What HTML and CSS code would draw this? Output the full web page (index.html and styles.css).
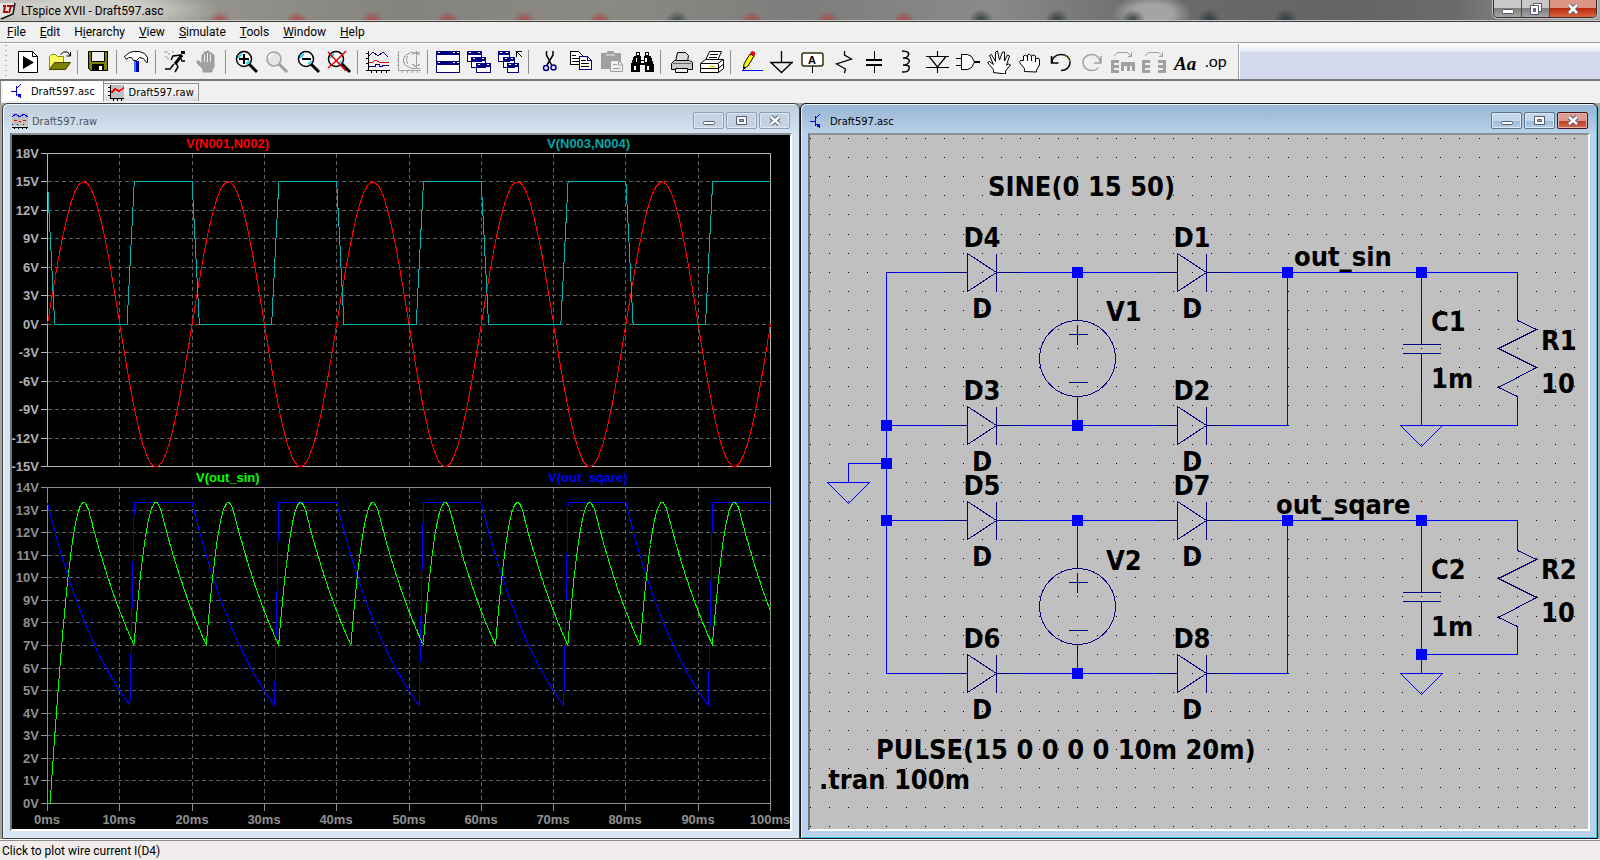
FILE: index.html
```html
<!DOCTYPE html>
<html lang="en">
<head>
    <meta charset="UTF-8">
    <meta name="viewport" content="width=device-width, initial-scale=1.0">
    <title>LTspice XVII - Draft597.asc</title>
    <link rel="stylesheet" href="styles.css">
</head>
<body>

    <!-- Title bar -->
    <header class="titlebar">
        <svg class="app-icon" width="16" height="18" viewBox="0 0 16 18" aria-hidden="true">
            <path d="M0 1h15l-2 11-11 5-2-2z" fill="#e8e4e0"/>
            <path d="M1 17l12-5 2-11" fill="none" stroke="#111" stroke-width="1.5"/>
            <path d="M3 4h2l-1 6h4M7 4h7M11 4l-2 7" fill="none" stroke="#a80c0c" stroke-width="2"/>
        </svg>
        <h1>LTspice XVII - Draft597.asc</h1>
        <div class="app-buttons">
            <button aria-label="Minimize"><svg width="12" height="12" viewBox="0 0 12 12"><rect x=".5" y="6.500" width="11" height="4" rx="1" fill="#fff" stroke="#555a70"/></svg></button>
            <button aria-label="Restore"><svg width="12" height="12" viewBox="0 0 12 12"><path d="M3.500 .5h8v8h-8z" fill="#fff" stroke="#555a70"/><path d="M.5 2.500h8v9h-8z" fill="#fff" stroke="#555a70"/><path d="M3.500 5.500h2v3h-2z" fill="#888" stroke="#555a70"/></svg></button>
            <button class="close" aria-label="Close"><svg width="12" height="12" viewBox="0 0 12 12"><path d="M2 2l8 8M10 2l-8 8" stroke="#555a70" stroke-width="4.500"/><path d="M2 2l8 8M10 2l-8 8" stroke="#fff" stroke-width="2.500"/></svg></button>
        </div>
    </header>

    <!-- Menu -->
    <nav class="menu">
        <a href="#"><u>F</u>ile</a>
        <a href="#"><u>E</u>dit</a>
        <a href="#">H<u>i</u>erarchy</a>
        <a href="#"><u>V</u>iew</a>
        <a href="#"><u>S</u>imulate</a>
        <a href="#"><u>T</u>ools</a>
        <a href="#"><u>W</u>indow</a>
        <a href="#"><u>H</u>elp</a>
    </nav>

    <!-- Toolbar -->
    <div class="toolbar">
        <div class="tools">
            <button aria-label="Run"><svg viewBox="0 0 25 24"><path d="M3.500 1.500h14l5 5v16h-19z" fill="#fff" stroke="#000"/><path d="M17.500 1.500v5h5" fill="none" stroke="#000"/><path d="M8 6v13l11-6.500z"/></svg></button>
            <button aria-label="Open"><svg viewBox="0 0 25 24"><path d="M3.500 19.500v-13l2-2h4l2 2h6v6h-8z" fill="#ffff60" stroke="#8a8a20"/><path d="M3.500 19.500l5-7h16l-5 7z" fill="#808000" stroke="#404000"/><path d="M14.500 4.500l3-2.500h4l3 4M20.500 6h4v-4" fill="none" stroke="#000"/></svg></button>
            <i></i>
            <button aria-label="Save"><svg viewBox="0 0 25 24"><path d="M3.500 1.500h19v19h-17l-2-2z" fill="#808000" stroke="#000"/><path d="M6.500 1.500h13v10h-13z" fill="#efefef" stroke="#000"/><path d="M7 14h12v7H7z"/><path d="M14 16h3v4h-3z" fill="#fff"/></svg></button>
            <i></i>
            <button aria-label="Control panel"><svg viewBox="0 0 25 24"><path d="M.5 6.500l5-4 4-1h6l5 2 3 4v5h-1l-3-4-4-1-3 3h-3l-2-3h-3l-2 2z" fill="#fff" stroke="#000"/><path d="M10 11h5v11h-5z" fill="#0000d8"/><path d="M10 11h2v11h-2z" fill="#4070ff"/><path d="M14.500 11v11" stroke="#000080"/></svg></button>
            <i></i>
            <button aria-label="Simulate"><svg viewBox="0 0 25 24"><path d="M18 1h4v3h-4z"/><path d="M19 5l-7 9" fill="none" stroke="#000" stroke-width="3"/><path d="M18 5l-8 1-2 4M17 7l2 4h3M13 13l2 4-3 5M11 14l-4 5H2" fill="none" stroke="#000" stroke-width="1.500"/><path d="M1 2h3l3 3M2 6l4 3M9 1l2 2" fill="none" stroke="#999"/></svg></button>
            <button aria-label="Halt" disabled><svg viewBox="0 0 25 24"><path d="M9 22v-3l-6-6v-2h2l3 3V5h2v6V2h3v9V1h2v10V3h3v9V5h2v12l-2 3v2z" fill="#a0a0a0" stroke="#999"/><path d="M10.500 5v7M13.500 3v9M16.500 4v8" stroke="#efefef"/></svg></button>
            <i></i>
            <button aria-label="Zoom in"><svg viewBox="0 0 25 24"><path d="M16 14l8 8" stroke="#000" stroke-width="3"/><circle cx="11" cy="9" r="7.500" fill="#fff" stroke="#000" stroke-width="1.500"/><path d="M6 8a5 5 0 0 1 3-4M16 10a5 5 0 0 1-3 4" fill="none" stroke="#20d8f0" stroke-width="2"/><path d="M6 9h10M11 4v10" stroke="#000" stroke-width="2"/></svg></button>
            <button aria-label="Pan" disabled><svg viewBox="0 0 25 24"><path d="M15 14l8 8" stroke="#a0a0a0" stroke-width="3"/><circle cx="10" cy="9" r="7" fill="#e4e4e4" stroke="#a0a0a0" stroke-width="1.500"/><path d="M5 8a5 5 0 0 1 4-4" fill="none" stroke="#fff" stroke-width="2"/></svg></button>
            <button aria-label="Zoom out"><svg viewBox="0 0 25 24"><path d="M16 14l8 8" stroke="#000" stroke-width="3"/><circle cx="11" cy="9" r="7.500" fill="#fff" stroke="#000" stroke-width="1.500"/><path d="M6 8a5 5 0 0 1 3-4M16 11a5 5 0 0 1-3 3" fill="none" stroke="#20d8f0" stroke-width="2"/><path d="M7 9h9" stroke="#000" stroke-width="2"/></svg></button>
            <button aria-label="Zoom full extents"><svg viewBox="0 0 25 24"><path d="M16 14l8 8" stroke="#000" stroke-width="3"/><circle cx="10" cy="9" r="7.500" fill="#fff" stroke="#000" stroke-width="1.500"/><path d="M5 8a5 5 0 0 1 3-4M15 11a5 5 0 0 1-3 3" fill="none" stroke="#20d8f0" stroke-width="2"/><path d="M2 2l18 19M20 1L9 12l-7 6" stroke="#f00000" stroke-width="1.600" fill="none"/></svg></button>
            <i></i>
            <button aria-label="Autorange"><svg viewBox="0 0 25 24" class="pixel"><path d="M3.500 1v19.500H25M1 3.500h2M1 8.500h2M1 13.500h2M1 20.500h2M6.500 20v3M11.500 20v3M16.500 20v3M21.500 20v3" fill="none" stroke="#000"/><path d="M4 6l4-4 5 4 5-4 5 5" fill="none" stroke="#000080"/><path d="M4 12h4l2-2 4 2h10" fill="none" stroke="#f00000"/><path d="M4 16.500h6v-2h4v2h3v-1h7" fill="none" stroke="#000080"/></svg></button>
            <button aria-label="Smith chart" disabled><svg viewBox="0 0 25 24" class="pixel"><path d="M2.500 1v19.500H25M1 5.500h2M1 10.500h2M1 15.500h2M6.500 20v3M11.500 20v3M16.500 20v3M21.500 20v3M24 2h-8l-6 3-3 5 2 5 6 3h9M20.500 1v17M16 5l4-3 4 3M16 14l4 3 4-3M12 6l-2 4 2 4" fill="none" stroke="#a0a0a0"/></svg></button>
            <i></i>
            <button aria-label="Tile"><svg viewBox="0 0 25 24" class="pixel"><path d="M1.500 1.500h23v21h-23z" fill="#fff" stroke="#000080"/><path d="M1 1h24v4H1zM1 11h24v4H1z" fill="#000080"/><path d="M3 2h2v1H3zM18 2h2v1h-2zM22 2h2v1h-2zM3 12h2v1H3zM18 12h2v1h-2zM22 12h2v1h-2z" fill="#fff"/></svg></button>
            <button aria-label="Cascade"><svg viewBox="0 0 25 24" class="pixel"><g fill="#fff" stroke="#000080"><path d="M1.500 1.500h14v10h-14zM5.500 7.500h14v10h-14zM10.500 13.500h14v9h-14z"/></g><path d="M1 1h15v4H1zM5 7h15v4H5zM10 13h15v4H10z" fill="#000080"/><path d="M3 2h2v1H3zM12 2h2v1h-2zM7 8h2v1H7zM16 8h2v1h-2zM12 14h2v1h-2zM21 14h2v1h-2z" fill="#fff"/></svg></button>
            <button aria-label="Close all"><svg viewBox="0 0 25 24" class="pixel"><g fill="#fff" stroke="#000080"><path d="M1.500 1.500h11v10h-11zM6.500 7.500h11v10h-11zM10.500 13.500h11v9h-11z"/></g><path d="M1 1h12v4H1zM6 7h12v4H6zM10 13h12v4H10z" fill="#000080"/><path d="M3 2h2v1H3zM9 2h2v1H9zM8 8h2v1H8zM14 8h2v1h-2zM12 14h2v1h-2zM18 14h2v1h-2z" fill="#fff"/><path d="M19.500 7V1.500H25M20 2l5 5" fill="none" stroke="#000"/></svg></button>
            <i></i>
            <button aria-label="Cut"><svg viewBox="0 0 25 24"><path d="M10.500 1v4l5 10M17 1v4l-6 10" fill="none" stroke="#000" stroke-width="1.500"/><circle cx="10" cy="18" r="2.500" fill="none" stroke="#000080" stroke-width="1.500"/><circle cx="17.500" cy="17.500" r="2.500" fill="none" stroke="#000080" stroke-width="1.500"/></svg></button>
            <button aria-label="Copy"><svg viewBox="0 0 25 24" class="pixel"><path d="M3.500 1.500h8l4 4v9h-12z" fill="#fff" stroke="#000"/><path d="M5 5.500h4M5 8.500h7M5 11.500h7" stroke="#000"/><path d="M12.500 6.500h8l4 4v9h-12z" fill="#fff" stroke="#000080"/><path d="M20.500 6v4.500h4" fill="none" stroke="#000080"/><path d="M14 10.500h5M14 13.500h8M14 16.500h8" stroke="#000"/></svg></button>
            <button aria-label="Paste" disabled><svg viewBox="0 0 25 24"><path d="M3 3h5l2-2h5l2 2h6v16H3z" fill="#a0a0a0"/><path d="M8 5h9" stroke="#efefef"/><path d="M12.500 10.500h8l4 4v7h-12z" fill="#efefef" stroke="#a0a0a0"/><path d="M20.500 11v4h4M15 14.500h4M15 18.500h7" fill="none" stroke="#a0a0a0"/></svg></button>
            <button aria-label="Find"><svg viewBox="0 0 25 24" class="pixel"><path d="M7 2h4v4h1v4h3V6h1V2h4v4h2l3 9v7h-9v-7h-5v7H2v-7l3-9h2z"/><path d="M8 3h2v2H8zM17 3h2v2h-2zM7 8h1v4H7zM16 8h2v4h-2zM5 16h2v4H5zM18 16h2v4h-2zM12 11h3v2h-3z" fill="#fff"/></svg></button>
            <i></i>
            <button aria-label="Print"><svg viewBox="0 0 25 24"><path d="M7.500 11.500l2-9h8l3 3-1 6" fill="#ddd" stroke="#000"/><path d="M3.500 13.500l3-3h15l3 2v7h-21z" fill="#c8c8c8" stroke="#000"/><path d="M5 13.500h18" stroke="#666"/><path d="M7.500 18.500h12v4h-12z" fill="#efefef" stroke="#000"/></svg></button>
            <button aria-label="Print setup"><svg viewBox="0 0 25 24"><path d="M6.500 10.500l4-9h12l-4 9" fill="#fff" stroke="#000"/><path d="M11 4.500h8M10 7.500h8" stroke="#000"/><path d="M1.500 13.500l5-4h18v9l-5 4h-18z" fill="#fff" stroke="#000"/><path d="M2 13.500h17l5-4M19.500 14v8M2 18.500h17l5-4" fill="none" stroke="#000"/><path d="M10 16.500h6" stroke="#e8e000" stroke-width="1.500"/></svg></button>
            <i></i>
            <button aria-label="Wire"><svg viewBox="0 0 25 24"><path d="M4 20.500h21" stroke="#0000f0"/><path d="M5.500 19l.5-5 6-10 4 2-6 10z" fill="#ffff00" stroke="#000"/><path d="M5 20v-4l3 2z"/><path d="M12 3l2-2 3 1v3l-1 2z" fill="#f00000"/></svg></button>
            <button aria-label="Ground"><svg viewBox="0 0 25 24"><path d="M12.500 1v11M1 12.500h23M2 12.500l10.500 10L23 12.500" fill="none" stroke="#000" stroke-width="1.300"/></svg></button>
            <button aria-label="Label net"><svg viewBox="0 0 25 24"><rect x="2" y="3" width="21" height="13" rx="2" fill="#fff" stroke="#303010" stroke-width="1.500"/><path d="M12.500 16v7" stroke="#000"/><text x="12" y="14" class="glyph-a">A</text></svg></button>
            <button aria-label="Resistor"><svg viewBox="0 0 25 24"><path d="M13.500 1v4l7 4-15 5 9 5-1 4" fill="none" stroke="#000" stroke-width="1.300"/></svg></button>
            <button aria-label="Capacitor"><svg viewBox="0 0 25 24" class="pixel"><path d="M12.500 1v9M12.500 15v8" stroke="#000"/><path d="M4 10h16M4 15h16" stroke="#000" stroke-width="2"/></svg></button>
            <button aria-label="Inductor"><svg viewBox="0 0 25 24"><path d="M9 1c6 0 8 2 6 5-1 2-3 2-5 2 6 0 7 2 6 4-1 2-3 3-6 3 6 0 7 1 6 4-1 3-3 3-7 3" fill="none" stroke="#000" stroke-width="1.500"/></svg></button>
            <button aria-label="Diode"><svg viewBox="0 0 25 24"><path d="M13.500 1v5M13.500 17v6M2 6.500h23M2 17.500h23M5 6.500l8.500 10.500L22 6.500" fill="none" stroke="#000" stroke-width="1.200"/></svg></button>
            <button aria-label="Component"><svg viewBox="0 0 25 24"><path d="M6.500 4.500h6l4 2 3 5.500-3 5.500-4 2h-6z" fill="#fff" stroke="#000"/><path d="M1 8.500h5M1 15.500h5" stroke="#000"/><path d="M19 12h6" stroke="#000" stroke-width="2"/></svg></button>
            <button aria-label="Move"><svg viewBox="0 0 25 24"><path d="M7.500 22.500v-3l-6-7 2-1 4 3-4-9 2-1 4 7V2l2-1 2 9 3-8h2v9l3-6 2 1-3 9 2-1 2 1-5 6v3z" fill="#fff" stroke="#000"/></svg></button>
            <button aria-label="Drag"><svg viewBox="0 0 25 24"><path d="M7.500 21.500v-3l-5-6 1-2h3V6l2-1 2 2V5l2-1 2 2 2-1 2 1v3l3-1 1 2v5l-3 5v2z" fill="#fff" stroke="#000"/><path d="M10.500 6v5M14.500 6v5M18.500 8v4" stroke="#000"/></svg></button>
            <button aria-label="Undo"><svg viewBox="0 0 25 24"><path d="M4 13a9 7.500 0 0 1 9-8.500c5 0 9 3 9 8s-4 8-9 8" fill="none" stroke="#000" stroke-width="1.500"/><path d="M15 5c5 1 6 4 7 7" fill="none" stroke="#808000"/><path d="M3.500 6v7h7" fill="none" stroke="#000" stroke-width="1.500"/></svg></button>
            <button aria-label="Redo" disabled><svg viewBox="0 0 25 24"><path d="M21 13a8 7.500 0 0 0-8-8.500c-5 0-9 3-9 8s4 8 9 8c3 0 5-1 6-3M22 6v7h-7" fill="none" stroke="#a0a0a0" stroke-width="1.500"/></svg></button>
            <button aria-label="Rotate" disabled><svg viewBox="0 0 25 24" class="pixel"><path d="M1 10h8v3H4v2h5v3H4v2h5v3H1zM11 12h14v9h-3v-5h-2v5h-3v-5h-3v5h-3z" fill="#a0a0a0"/><path d="M4 6l4-4h9l4 4M21.500 2v4h-4" fill="none" stroke="#a0a0a0"/></svg></button>
            <button aria-label="Mirror" disabled><svg viewBox="0 0 25 24" class="pixel"><path d="M1 10h8v3H4v2h5v3H4v2h5v3H1zM25 10h-8v3h5v2h-5v3h5v2h-5v3h8z" fill="#a0a0a0"/><path d="M4 6l4-4h9l4 4M21.500 2v4h-4" fill="none" stroke="#a0a0a0"/></svg></button>
            <button aria-label="Text"><svg viewBox="0 0 25 24"><text x="2" y="20" class="glyph-text">Aa</text></svg></button>
            <button aria-label="SPICE directive"><svg viewBox="0 0 25 24"><text x="2" y="17" class="glyph-op">.op</text></svg></button>
        </div>
        <div class="toolbar-rest"></div>
    </div>

    <!-- Document tabs -->
    <div class="tabs">
        <button class="tab active">
            <svg width="16" height="16" viewBox="0 0 16 16" class="pixel"><path d="M5 3v10M5.500 3v10M0 8.500h5M5 6l5-5M5 10l5 5" fill="none" stroke="#0000f0"/><path d="M7 11h3v3H7z" fill="#0000f0"/></svg>
            Draft597.asc
        </button>
        <button class="tab">
            <svg width="16" height="16" viewBox="0 0 16 16" class="pixel"><path d="M2 0h14v13H2z" fill="#c0c0c0"/><path d="M2.500 0v13.500H16M0 2.500h2M0 6.500h2M0 10.500h2M5.500 13v3M9.500 13v3M13.500 13v3" fill="none" stroke="#000"/><path d="M3 8l4-4 4 2 5-3" fill="none" stroke="#f00000" stroke-width="1.500"/></svg>
            Draft597.raw
        </button>
    </div>

    <main class="mdi">

        <!-- Waveform window -->
        <section class="child">
            <div class="caption">
                <svg width="16" height="16" viewBox="0 0 16 16" class="pixel"><path d="M0 0h16v13H0z" fill="#c0c0c0"/><path d="M0 4l4-3 4 3 4-3 4 3" fill="none" stroke="#0000f0"/><path d="M2 7h3v1H2zM7 8h2v1H7zM11 7h3v1h-3z" fill="#f00000"/><path d="M0 11h1v1H0zM5 11h1v1H5zM11 11h1v1h-1z" fill="#000080"/><path d="M0 14.500h16M2.500 14v2M6.500 14v2M10.500 14v2M14.500 14v2" stroke="#000"/></svg>
                <h2>Draft597.raw</h2>
                <div class="child-buttons">
                    <button aria-label="Minimize"><svg width="12" height="12" viewBox="0 0 12 12"><rect x=".5" y="6.500" width="11" height="3" rx="1" fill="#fff" stroke="#555a70"/></svg></button>
                    <button aria-label="Maximize"><svg width="12" height="12" viewBox="0 0 12 12"><path d="M.5 1.500h10v8H.5z" fill="#fff" stroke="#555a70"/><path d="M3.500 4.500h4v2h-4z" fill="#9ab" stroke="#555a70"/></svg></button>
                    <button aria-label="Close"><svg width="12" height="12" viewBox="0 0 12 12"><path d="M2 2l8 7M10 2L2 9" stroke="#555a70" stroke-width="4.500"/><path d="M2 2l8 7M10 2L2 9" stroke="#fff" stroke-width="2.500"/></svg></button>
                </div>
            </div>
            <div class="client plot-client">
                <svg id="plot" viewBox="12 135 778 694"></svg>
            </div>
        </section>

        <!-- Schematic window -->
        <section class="child active">
            <div class="caption">
                <svg width="16" height="16" viewBox="0 0 16 16" class="pixel"><path d="M5 3v10M5.500 3v10M0 8.500h5M5 6l5-5M5 10l5 5" fill="none" stroke="#0000f0"/><path d="M7 11h3v3H7z" fill="#0000f0"/></svg>
                <h2>Draft597.asc</h2>
                <div class="child-buttons">
                    <button aria-label="Minimize"><svg width="12" height="12" viewBox="0 0 12 12"><rect x=".5" y="6.500" width="11" height="3" rx="1" fill="#fff" stroke="#555a70"/></svg></button>
                    <button aria-label="Maximize"><svg width="12" height="12" viewBox="0 0 12 12"><path d="M.5 1.500h10v8H.5z" fill="#fff" stroke="#555a70"/><path d="M3.500 4.500h4v2h-4z" fill="#9ab" stroke="#555a70"/></svg></button>
                    <button class="close" aria-label="Close"><svg width="12" height="12" viewBox="0 0 12 12"><path d="M2 2l8 7M10 2L2 9" stroke="#555a70" stroke-width="4.500"/><path d="M2 2l8 7M10 2L2 9" stroke="#fff" stroke-width="2.500"/></svg></button>
                </div>
            </div>
            <div class="client schematic-client">
                <svg id="schematic" viewBox="810 135 778 694">
                    <defs>
                        <g id="diode">
                            <path d="M-37 0H-15M14 0H38M-15 -19V19L14 0L-15 -19M14 -19V19"/>
                        </g>
                        <g id="source">
                            <circle r="38"/>
                            <path d="M0 -48V-38M0 38V48M-9 -24H10M0 -34V-14M-9 24H10"/>
                        </g>
                        <g id="capacitor">
                            <path d="M0 -38V-4M-19 -4H19M-19 5H19M0 5V42"/>
                        </g>
                        <g id="resistor">
                            <path d="M0 -48V-38L19 -29L-19 -10L19 9L-19 29L0 38V48"/>
                        </g>
                        <path id="ground" d="M-21 0H21L0 21Z"/>
                    </defs>

                    <g id="grid"></g>

                    <g class="wire" transform="translate(.5 .5)">
                        <path d="M886 272H945M1020 272H1155M1230 272H1517V310M886 272V673H945M1020 673H1155M1230 673H1287V520"/>
                        <path d="M886 425H945M1020 425H1155M1230 425H1287V272"/>
                        <path d="M886 520H945M1020 520H1155M1230 520H1517V540"/>
                        <path d="M886 463H848V482M1077 272V310M1077 406V425M1077 520V558M1077 654V673"/>
                        <path d="M1421 272V310M1421 390V425H1517V406M1421 520V558M1421 638V673M1421 654H1517V636"/>
                        <use href="#ground" x="848" y="482"/>
                        <use href="#ground" x="1421" y="425"/>
                        <use href="#ground" x="1421" y="673"/>
                    </g>

                    <g class="part" transform="translate(.5 .5)">
                        <use href="#diode" x="982" y="272"/>
                        <use href="#diode" x="1192" y="272"/>
                        <use href="#diode" x="982" y="425"/>
                        <use href="#diode" x="1192" y="425"/>
                        <use href="#diode" x="982" y="520"/>
                        <use href="#diode" x="1192" y="520"/>
                        <use href="#diode" x="982" y="673"/>
                        <use href="#diode" x="1192" y="673"/>
                        <use href="#source" x="1077" y="358"/>
                        <use href="#source" x="1077" y="606"/>
                        <use href="#capacitor" x="1421" y="348"/>
                        <use href="#capacitor" x="1421" y="596"/>
                        <use href="#resistor" x="1517" y="358"/>
                        <use href="#resistor" x="1517" y="588"/>
                    </g>

                    <g id="nodes"></g>

                    <g class="label">
                        <text x="988" y="196">SINE(0 15 50)</text>
                        <text x="876" y="759">PULSE(15 0 0 0 0 10m 20m)</text>
                        <text x="819" y="789">.tran 100m</text>
                        <text x="1294" y="266">out_sin</text>
                        <text x="1276" y="514">out_sqare</text>
                        <text x="1106" y="321">V1</text>
                        <text x="1106" y="570">V2</text>
                        <text x="1431" y="331">C1</text>
                        <text x="1431" y="388">1m</text>
                        <text x="1541" y="350">R1</text>
                        <text x="1541" y="393">10</text>
                        <text x="1431" y="579">C2</text>
                        <text x="1431" y="636">1m</text>
                        <text x="1541" y="579">R2</text>
                        <text x="1541" y="622">10</text>
                    </g>
                    <g class="label centered">
                        <text x="982" y="247">D4</text><text x="982" y="318">D</text>
                        <text x="1192" y="247">D1</text><text x="1192" y="318">D</text>
                        <text x="982" y="400">D3</text><text x="982" y="471">D</text>
                        <text x="1192" y="400">D2</text><text x="1192" y="471">D</text>
                        <text x="982" y="495">D5</text><text x="982" y="566">D</text>
                        <text x="1192" y="495">D7</text><text x="1192" y="566">D</text>
                        <text x="982" y="648">D6</text><text x="982" y="719">D</text>
                        <text x="1192" y="648">D8</text><text x="1192" y="719">D</text>
                    </g>
                </svg>
            </div>
        </section>
    </main>

    <footer class="status">Click to plot wire current I(D4)</footer>

    <script src="script.js"></script>
</body>
</html>
```

FILE: styles.css
```css
* {
    margin: 0;
    padding: 0;
    box-sizing: border-box;
}

body {
    display: flex;
    flex-direction: column;
    min-height: 100vh;
    font-family: Roboto, "Noto Sans", sans-serif;
    font-size: 12px;
    color: #000;
    background: #f0f0f0;
}

button {
    font: inherit;
    color: inherit;
    border: none;
    background: none;
}

svg {
    display: block;
    flex: none;
}

.pixel {
    shape-rendering: crispEdges;
}

/* Title bar */
.titlebar {
    display: flex;
    align-items: flex-start;
    height: 22px;
    border-bottom: 1px solid #3c3c3c;
    box-shadow: inset 0 -1px 0 #c8c8c6;
    background:
        radial-gradient(circle at 220px 23px, #b33a38bb 0 3px, transparent 12px),
        radial-gradient(circle at 297px 23px, #b33a38bb 0 3px, transparent 12px),
        radial-gradient(circle at 372px 23px, #b33a38bb 0 3px, transparent 12px),
        radial-gradient(circle at 448px 23px, #b33a38bb 0 3px, transparent 12px),
        radial-gradient(circle at 524px 23px, #b33a38bb 0 3px, transparent 12px),
        radial-gradient(circle at 600px 23px, #b33a38bb 0 3px, transparent 12px),
        radial-gradient(circle at 677px 23px, #27363dbb 0 3px, transparent 12px),
        radial-gradient(circle at 752px 23px, #b33a38bb 0 3px, transparent 12px),
        radial-gradient(circle at 828px 23px, #b33a38bb 0 3px, transparent 12px),
        radial-gradient(circle at 904px 23px, #b33a38bb 0 3px, transparent 12px),
        radial-gradient(circle at 981px 21px, #27363dbb 0 3px, transparent 12px),
        radial-gradient(circle at 1057px 21px, #27363dbb 0 3px, transparent 12px),
        radial-gradient(circle at 1133px 21px, #27363dbb 0 3px, transparent 12px),
        radial-gradient(circle at 1209px 21px, #27363dbb 0 3px, transparent 12px),
        radial-gradient(circle at 1286px 21px, #27363dbb 0 3px, transparent 12px),
        radial-gradient(ellipse 40px 20px at 1152px 14px, #a5a4a2 50%, transparent),
        radial-gradient(ellipse 130px 24px at 90px 10px, #d2d0cb 40%, transparent),
        linear-gradient(90deg, #b5b2ad 0, #96948e 12%, #84837e 25%, #8b8983 38%, #7d7d7c 50%, #8a8a88 62%, #6c6b6a 72%, #656463 84%, #6c6b69 91%, #a9a8a6 100%);
}

.app-icon {
    margin-top: 2px;
}

.titlebar h1 {
    flex: 1;
    padding-left: 5px;
    font-size: 12px;
    font-weight: 400;
    line-height: 22px;
}

.app-buttons {
    display: flex;
    height: 18px;
    margin-right: 3px;
    border: 1px solid #2f2f2f;
    border-top: none;
    border-radius: 0 0 5px 5px;
    box-shadow: 0 0 0 1px #c4c3c1;
    overflow: hidden;
}

.app-buttons button {
    display: flex;
    align-items: center;
    justify-content: center;
    width: 28px;
    border-right: 1px solid #4a4a4a;
    background: linear-gradient(#c9c8c6 0 45%, #7e7d7b 50%, #a6a5a3);
}

.app-buttons .close {
    width: 46px;
    border-right: none;
    background: linear-gradient(#dd9585 0 45%, #bb2b0e 50%, #d86540);
}

/* Menu */
.menu {
    display: flex;
    height: 21px;
    border-bottom: 1px solid #a0a0a0;
}

.menu a {
    padding: 0 7px;
    line-height: 20px;
    color: #000;
    text-decoration: none;
}

/* Toolbar */
.toolbar {
    display: flex;
    height: 38px;
    border-top: 1px solid #fff;
    border-bottom: 2px solid #777;
}

.tools {
    display: flex;
    align-items: center;
    padding: 0 7px 0 12px;
    background: radial-gradient(circle, #b4b4b4 1px, transparent 1px) 4px 4px / 4px 5px repeat-y;
    border-right: 1px solid #a0a0a0;
}

.tools button {
    display: flex;
    justify-content: center;
    width: 31px;
}

.tools button svg {
    width: 25px;
    height: 24px;
}

.tools i {
    width: 8px;
    height: 24px;
    border-left: 3px solid transparent;
    background: linear-gradient(90deg, #909090 1px, transparent 1px);
    background-clip: padding-box;
}

.glyph-a {
    font: bold 11px "Liberation Sans", sans-serif;
    text-anchor: middle;
}

.glyph-text {
    font: italic bold 19px "Liberation Serif", serif;
}

.glyph-op {
    font: 16px Lato, sans-serif;
}

.toolbar-rest {
    flex: 1;
    border-left: 1px solid #fff;
    background: linear-gradient(#fff, #e2e7f3 8px, #d4d9ed 8px);
}

/* Document tabs */
.tabs {
    display: flex;
    align-items: flex-start;
    height: 22px;
    padding-left: 2px;
    border-left: 1px solid #888;
}

.tab {
    display: flex;
    align-items: center;
    gap: 5px;
    height: 18px;
    margin-top: 2px;
    padding: 0 4px;
    border: 1px solid #909090;
    border-left: none;
    border-bottom: none;
    background: linear-gradient(#f2f2f2 50%, #dcdce0);
}

.tab.active {
    gap: 4px;
    height: 20px;
    margin-top: 0;
    padding: 0 8px;
    background: #fff;
    border-top: none;
}

.tab,
.caption h2 {
    font-size: 12px;
    font-family: "DejaVu Sans Condensed", sans-serif;
    font-size: 11px;
}

/* Child windows */
.mdi {
    flex: 1;
    display: grid;
    grid-template-columns: 1fr 1fr;
    padding: 0 2px;
    background: #a8a49c;
}

.child {
    display: flex;
    flex-direction: column;
    min-width: 0;
    padding: 0 7px 7px;
    border: 1px solid #3c4048;
    border-radius: 6px 6px 0 0;
    background: linear-gradient(#bdccdb, #d7e4f2 30px);
    box-shadow: inset 1px 1px 0 #f4f8fc;
    color: #4b535c;
}

.child.active {
    border-color: #101418;
    background: linear-gradient(#98b4d2, #b9d1ea 30px);
    box-shadow: inset 1px 1px 0 #e8f2fc, inset -1px -1px 0 #38c4e0;
    color: #000;
}

.caption {
    display: flex;
    align-items: center;
    height: 29px;
    padding: 0 2px;
}

.caption h2 {
    flex: 1;
    padding: 5px 0 0 4px;
    font-weight: 400;
}

.caption svg {
    margin-top: 4px;
}

.child-buttons {
    display: flex;
    gap: 2px;
    padding-top: 4px;
}

.child-buttons button {
    display: flex;
    align-items: center;
    justify-content: center;
    width: 31px;
    height: 17px;
    border: 1px solid #8c9db4;
    border-radius: 2px;
    box-shadow: inset 0 0 0 1px #dfe9f3;
    background: #c3d3e4;
}

.child-buttons button svg {
    margin-top: 0;
}

.active .child-buttons button {
    border-color: #5d7490;
    background: linear-gradient(#c3d7ec 50%, #9bb8d6 50%, #b4cfe8);
}

.active .child-buttons .close {
    border-color: #431520;
    background: linear-gradient(#dd9c90 50%, #bc3a22 50%, #cd6a50);
    box-shadow: inset 0 0 0 1px #e8b4a8;
}

.client {
    flex: 1;
    display: flex;
    border: 2px solid;
    border-color: #8c9094 #fff #fff #707274;
}

.client svg {
    flex: 1;
    min-width: 0;
    width: 100%;
}

.plot-client {
    background: #000;
}

.schematic-client {
    background: #c0c0c0;
}

/* Waveforms */
#plot {
    font: bold 13px "Liberation Sans", Arial, sans-serif;
}

#plot path {
    fill: none;
    stroke-width: 1px;
    shape-rendering: crispEdges;
}

#plot .grid-line {
    stroke: #606060;
    stroke-dasharray: 4 3;
}

#plot .frame {
    stroke: #b4b4b4;
}

#plot .frame.dim {
    stroke: #909090;
}

#plot .axis {
    fill: #b0b0b0;
    text-anchor: end;
}

#plot .axis.dim {
    fill: #909090;
}

#plot .time {
    fill: #909090;
    text-anchor: middle;
}

/* Schematic */
#schematic .wire,
#schematic .part {
    fill: none;
    stroke: #0000ff;
    shape-rendering: crispEdges;
}

#schematic .part {
    stroke: #000080;
}

#grid {
    shape-rendering: crispEdges;
}

#nodes {
    fill: #0000ff;
    shape-rendering: crispEdges;
}

.label {
    font: bold 27px "DejaVu Sans Condensed", "DejaVu Sans", sans-serif;
}

.centered {
    text-anchor: middle;
}

/* Status bar */
.status {
    height: 21px;
    padding-left: 2px;
    border-top: 1px solid #fff;
    box-shadow: inset 0 1px 0 #8e8e8e;
    background: #f1edec;
    line-height: 23px;
}
```

FILE: script.js
```javascript
const SVG = 'http://www.w3.org/2000/svg';

function add(parent, tag, attrs, text) {
    const el = document.createElementNS(SVG, tag);
    for (const key in attrs) {
        el.setAttribute(key, attrs[key]);
    }
    if (text) {
        el.textContent = text;
    }
    parent.appendChild(el);
    return el;
}

// Waveform panes
const plot = document.getElementById('plot');
const LEFT = 47;
const RIGHT = 770;
const panes = [
    { top: 153, bottom: 466, max: 18, min: -15, step: 3, cls: '' },
    { top: 487, bottom: 803, max: 14, min: 0, step: 1, cls: ' dim' }
];

const xAt = t => LEFT + (RIGHT - LEFT) * t / 100;
const yAt = (pane, v) => pane.top + (pane.bottom - pane.top) * (pane.max - v) / (pane.max - pane.min);

panes.forEach(pane => {
    const lines = add(plot, 'g', { transform: 'translate(.5 .5)' });
    for (let t = 10; t < 100; t += 10) {
        const x = Math.round(xAt(t));
        add(lines, 'path', { class: 'grid-line', d: `M${x} ${pane.top}V${pane.bottom}` });
    }
    for (let v = pane.max; v >= pane.min; v -= pane.step) {
        const y = Math.round(yAt(pane, v));
        add(lines, 'path', { class: 'grid-line', d: `M${LEFT} ${y}H${RIGHT}` });
        add(lines, 'path', { class: 'frame' + pane.cls, d: `M40 ${y}H${LEFT}` });
        add(plot, 'text', { class: 'axis' + pane.cls, x: 39, y: y + 5 }, v + 'V');
    }
    add(lines, 'path', { class: 'frame' + pane.cls, d: `M${LEFT} ${pane.top}H${RIGHT}V${pane.bottom}H${LEFT}Z` });
});

for (let t = 0; t <= 100; t += 10) {
    const x = Math.round(xAt(t));
    add(plot, 'path', { class: 'frame dim', d: `M${x} 803V810`, transform: 'translate(.5 .5)' });
    add(plot, 'text', { class: 'time', x: x, y: 824 }, t + 'ms');
}

// Source voltages, t in ms
const sine = t => 15 * Math.sin(2 * Math.PI * t / 20);

function pulse(t) {
    const p = t % 20;
    if (p < 1) return t === 100 ? 15 : 15 * (1 - p);
    if (p < 11) return 0;
    if (p < 12) return 15 * (p - 11);
    return 15;
}

// Bridge output: follows the source less two diode drops, otherwise RC decay
function rectified(source, start) {
    const dt = 0.05;
    let v = start;
    return t => {
        if (t > 0) {
            v = Math.max(v * Math.exp(-dt / 10.2), Math.abs(source(t)) - 1.67, 0);
        }
        return v;
    };
}

function trace(pane, color, fn) {
    const points = [];
    for (let i = 0; i <= 2000; i++) {
        const t = i / 20;
        points.push(xAt(t).toFixed(1) + ' ' + Math.round(yAt(pane, fn(t))));
    }
    add(plot, 'path', { stroke: color, d: 'M' + points.join('L'), transform: 'translate(.5 .5)' });
}

trace(panes[0], '#ff0000', sine);
trace(panes[0], '#00b4b4', pulse);
trace(panes[1], '#0000ff', rectified(pulse, 13.3));
trace(panes[1], '#00ff00', rectified(sine, 0));

add(plot, 'text', { x: 186, y: 148, fill: '#ff0000' }, 'V(N001,N002)');
add(plot, 'text', { x: 547, y: 148, fill: '#00a8a8' }, 'V(N003,N004)');
add(plot, 'text', { x: 196, y: 482, fill: '#00ff00' }, 'V(out_sin)');
add(plot, 'text', { x: 548, y: 482, fill: '#0000ff' }, 'V(out_sqare)');

// Schematic grid dots
const grid = document.getElementById('grid');
for (let row = 0; row < 37; row++) {
    for (let col = 0; col < 41; col++) {
        add(grid, 'rect', {
            x: 810 + Math.round(col * 19.1),
            y: 138 + Math.round(row * 19.1),
            width: 1,
            height: 1
        });
    }
}

// Wire junctions
const nodes = document.getElementById('nodes');
[
    [1077, 272], [1287, 272], [1421, 272],
    [886, 425], [1077, 425], [886, 463],
    [886, 520], [1077, 520], [1287, 520], [1421, 520],
    [1421, 654], [1077, 673]
].forEach(([x, y]) => add(nodes, 'rect', { x: x - 5, y: y - 5, width: 11, height: 11 }));
```
